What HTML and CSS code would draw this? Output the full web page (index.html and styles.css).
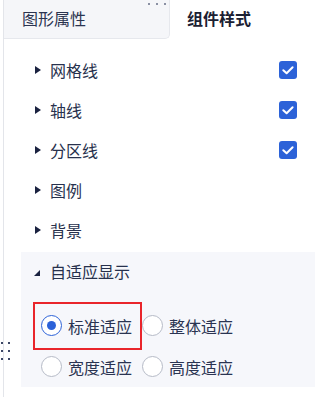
FILE: index.html
```html
<!DOCTYPE html>
<html lang="zh">
<head>
<meta charset="utf-8">
<link rel="stylesheet" href="styles.css">
</head>
<body>
<div class="panel">
  <div class="tabs">
    <div class="tab tab-inactive">图形属性</div>
    <div class="tab tab-active">组件样式</div>
    <span class="grip-top"><i></i><i></i><i></i></span>
  </div>
  <div class="list">
    <div class="row">
      <svg class="caret" width="6" height="8" viewBox="0 0 6 8"><polygon points="0,0 6,4 0,8"/></svg>
      <span class="label">网格线</span>
      <svg class="check" width="18" height="18" viewBox="0 0 18 18"><rect width="18" height="18" rx="3"/><path d="M4.3 9.2 L7.6 12.3 L13.6 6.2"/></svg>
    </div>
    <div class="row">
      <svg class="caret" width="6" height="8" viewBox="0 0 6 8"><polygon points="0,0 6,4 0,8"/></svg>
      <span class="label">轴线</span>
      <svg class="check" width="18" height="18" viewBox="0 0 18 18"><rect width="18" height="18" rx="3"/><path d="M4.3 9.2 L7.6 12.3 L13.6 6.2"/></svg>
    </div>
    <div class="row">
      <svg class="caret" width="6" height="8" viewBox="0 0 6 8"><polygon points="0,0 6,4 0,8"/></svg>
      <span class="label">分区线</span>
      <svg class="check" width="18" height="18" viewBox="0 0 18 18"><rect width="18" height="18" rx="3"/><path d="M4.3 9.2 L7.6 12.3 L13.6 6.2"/></svg>
    </div>
    <div class="row">
      <svg class="caret" width="6" height="8" viewBox="0 0 6 8"><polygon points="0,0 6,4 0,8"/></svg>
      <span class="label">图例</span>
    </div>
    <div class="row">
      <svg class="caret" width="6" height="8" viewBox="0 0 6 8"><polygon points="0,0 6,4 0,8"/></svg>
      <span class="label">背景</span>
    </div>
    <div class="section">
      <div class="row row-head">
        <svg class="caret caret-open" width="6" height="6" viewBox="0 0 6 6"><polygon points="6,0 6,6 0,6"/></svg>
        <span class="label">自适应显示</span>
      </div>
      <div class="radios">
        <label class="opt opt-marked"><span class="radio radio-on"></span><span>标准适应</span></label>
        <label class="opt"><span class="radio"></span><span>整体适应</span></label>
        <label class="opt"><span class="radio"></span><span>宽度适应</span></label>
        <label class="opt"><span class="radio"></span><span>高度适应</span></label>
      </div>
    </div>
  </div>
  <span class="grip-left"><i></i><i></i><i></i><i></i><i></i><i></i></span>
</div>
</body>
</html>
```

FILE: styles.css
```css
* { box-sizing: border-box; }
html, body { margin: 0; padding: 0; background: #fff; }
body {
  font-family: "Noto Sans CJK SC", "Noto Sans", sans-serif;
  font-size: 16px;
  color: #27314d;
  overflow: hidden;
}
.panel {
  position: relative;
  margin-left: 3px;
  border-left: 1px solid #e3e5ea;
  height: 397px;
}
.tabs {
  position: relative;
  display: flex;
  height: 39px;
}
.tab {
  display: flex;
  align-items: center;
  height: 39px;
  padding-bottom: 3px;
}
.tab-inactive {
  width: 166px;
  padding-left: 18px;
  background: #f5f6f9;
  border-right: 1px solid #e6e8ed;
  border-bottom: 1px solid #e6e8ed;
  border-bottom-right-radius: 5px;
  color: #2b3450;
}
.tab-active {
  padding-left: 17px;
  font-weight: 700;
  color: #1b2032;
}
.grip-top {
  position: absolute;
  left: 144px;
  top: 3px;
  display: flex;
  gap: 6px;
}
.grip-top i {
  display: block;
  width: 2px;
  height: 2px;
  background: #8a90a3;
}
.list {
  padding-left: 17px;
  margin-top: 11px;
}
.row {
  display: flex;
  align-items: center;
  height: 40px;
  padding-left: 14px;
  padding-right: 18px;
}
.caret {
  fill: #1a2240;
  margin-right: 9px;
  flex: none;
}
.caret-open { margin-top: 3px; margin-left: -1px; margin-right: 10px; }
.label { flex: 1; line-height: 1; }
.check rect { fill: #2c62d8; }
.check path {
  fill: none;
  stroke: #fff;
  stroke-width: 2;
  stroke-linecap: round;
  stroke-linejoin: round;
}
.section {
  margin-top: 2px;
  background: #f6f7fb;
  padding-bottom: 0;
}
.row-head { height: 38px; }
.radios {
  display: grid;
  grid-template-columns: 101px 1fr;
  padding-left: 20px;
  padding-top: 15px;
}
.opt {
  position: relative;
  display: flex;
  align-items: center;
  height: 41px;
  gap: 6px;
  color: #2a3452;
  line-height: 1;
}
.opt-marked::after {
  content: "";
  position: absolute;
  left: -8px;
  right: 0;
  top: -3px;
  bottom: -4px;
  border: 2px solid #e9252b;
}
.radio {
  width: 21px;
  height: 21px;
  border-radius: 50%;
  border: 1px solid #b6bbc7;
  background: #fff;
  display: flex;
  align-items: center;
  justify-content: center;
  flex: none;
}
.radio-on { border-color: #2c62d8; }
.radio-on::before {
  content: "";
  width: 9px;
  height: 9px;
  border-radius: 50%;
  background: #2c62d8;
}
.grip-left {
  position: absolute;
  left: -3px;
  top: 342px;
  display: grid;
  grid-template-columns: 2px 2px;
  column-gap: 5px;
  row-gap: 6px;
}
.grip-left i {
  display: block;
  width: 2px;
  height: 2px;
  background: #3c4766;
}
```
